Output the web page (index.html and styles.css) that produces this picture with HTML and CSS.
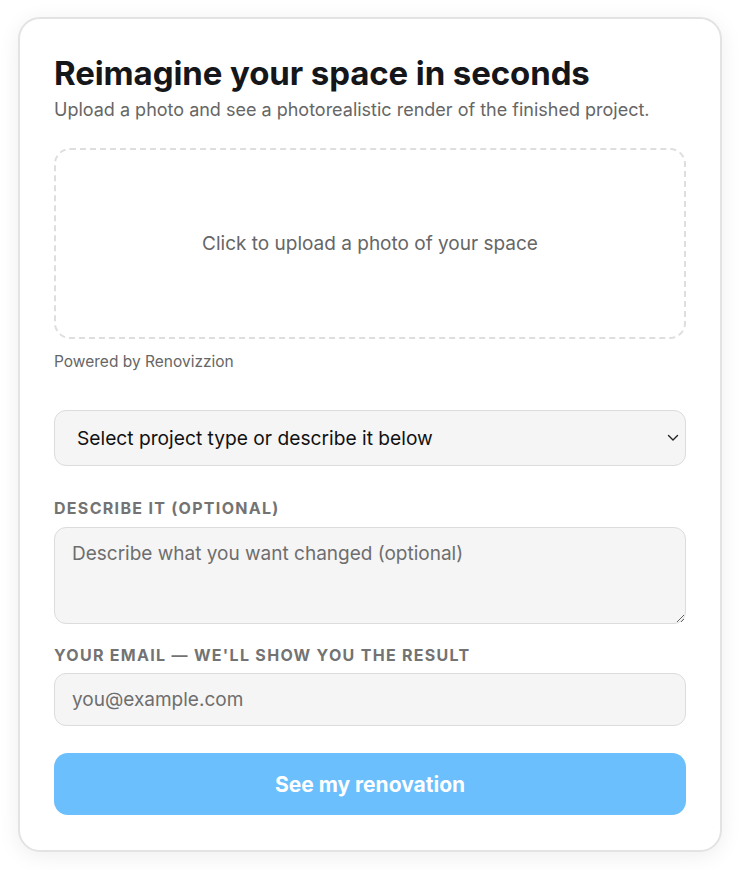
FILE: index.html
```html
<!DOCTYPE html>
<html lang="en">
<head>
<meta charset="utf-8">
<title>Reimagine your space</title>
<link rel="stylesheet" href="styles.css">
</head>
<body>
<main class="card">
  <h1 class="title">Reimagine your space in seconds</h1>
  <p class="subtitle">Upload a photo and see a photorealistic render of the finished project.</p>
  <label class="upload">
    <input type="file" accept="image/*" class="file-input">
    <span class="upload-text">Click to upload a photo of your space</span>
  </label>
  <p class="powered">Powered by Renovizzion</p>
  <div class="select-wrap">
    <select class="field select">
      <option>Select project type or describe it below</option>
    </select>
    <svg class="chevron" width="12" height="8" viewBox="0 0 12 8" aria-hidden="true"><path d="M1.5 1.5 L6 6 L10.5 1.5" fill="none" stroke="#222" stroke-width="1.4" stroke-linecap="round" stroke-linejoin="round"/></svg>
  </div>
  <label class="label" for="desc">Describe it (optional)</label>
  <textarea id="desc" class="field textarea" placeholder="Describe what you want changed (optional)"></textarea>
  <label class="label" for="email">Your email — we'll show you the result</label>
  <input id="email" type="email" class="field input" placeholder="you@example.com">
  <button class="cta" type="button">See my renovation</button>
</main>
</body>
</html>
```

FILE: styles.css
```css
* { box-sizing: border-box; }
html, body { margin: 0; padding: 0; background: #ffffff; }
body {
  font-family: Inter, "Noto Sans", Arial, sans-serif;
  padding: 17px 21px 20px 18px;
}
.card {
  width: 704px;
  background: #fff;
  border: 2px solid #e3e3e3;
  border-radius: 22px;
  box-shadow: 0 4px 22px rgba(0,0,0,0.07);
  padding: 34px 34px 35px 34px;
  display: flex;
  flex-direction: column;
}
.title {
  margin: 0;
  font-size: 33px;
  line-height: 40px;
  font-weight: 700;
  letter-spacing: -0.1px;
  color: #15161a;
}
.subtitle {
  margin: 4px 0 0;
  font-size: 18px;
  line-height: 26px;
  color: #666;
}
.upload {
  margin-top: 25px;
  height: 191px;
  flex-shrink: 0;
  border: 2px dashed #dedede;
  border-radius: 16px;
  display: flex;
  align-items: center;
  justify-content: center;
  cursor: pointer;
}
.file-input { display: none; }
.upload-text { font-size: 19px; color: #666; }
.powered {
  margin: 13px 0 0;
  font-size: 15.5px;
  line-height: 20px;
  color: #666;
}
.select-wrap { position: relative; margin-top: 38px; }
.field {
  width: 100%;
  background: #f5f5f5;
  border: 1px solid #dcdcdc;
  border-radius: 12px;
  font-family: inherit;
  font-size: 19px;
  color: #111;
  outline: none;
}
.select {
  -webkit-appearance: none;
  appearance: none;
  height: 56px;
  padding: 0 40px 0 22px;
  display: block;
  font-size: 19.2px;
}
.chevron { position: absolute; right: 7px; top: 24px; }
.label {
  margin-top: 32px;
  font-size: 16px;
  line-height: 20px;
  font-weight: 700;
  letter-spacing: 1.3px;
  text-transform: uppercase;
  color: #737373;
}
.textarea {
  margin-top: 9px;
  height: 97px;
  flex-shrink: 0;
  padding: 14px 17px;
  resize: vertical;
  line-height: 24px;
  display: block;
}
.textarea::placeholder, .input::placeholder { color: #6e6e6e; }
.textarea + .label { margin-top: 21px; }
.input {
  margin-top: 8px;
  height: 53px;
  flex-shrink: 0;
  padding: 0 17px;
  display: block;
}
.cta {
  margin-top: 27px;
  height: 62px;
  flex-shrink: 0;
  border: none;
  border-radius: 14px;
  background: #6bbffc;
  color: #fff;
  font-family: inherit;
  font-size: 21px;
  font-weight: 700;
  cursor: pointer;
}
```
